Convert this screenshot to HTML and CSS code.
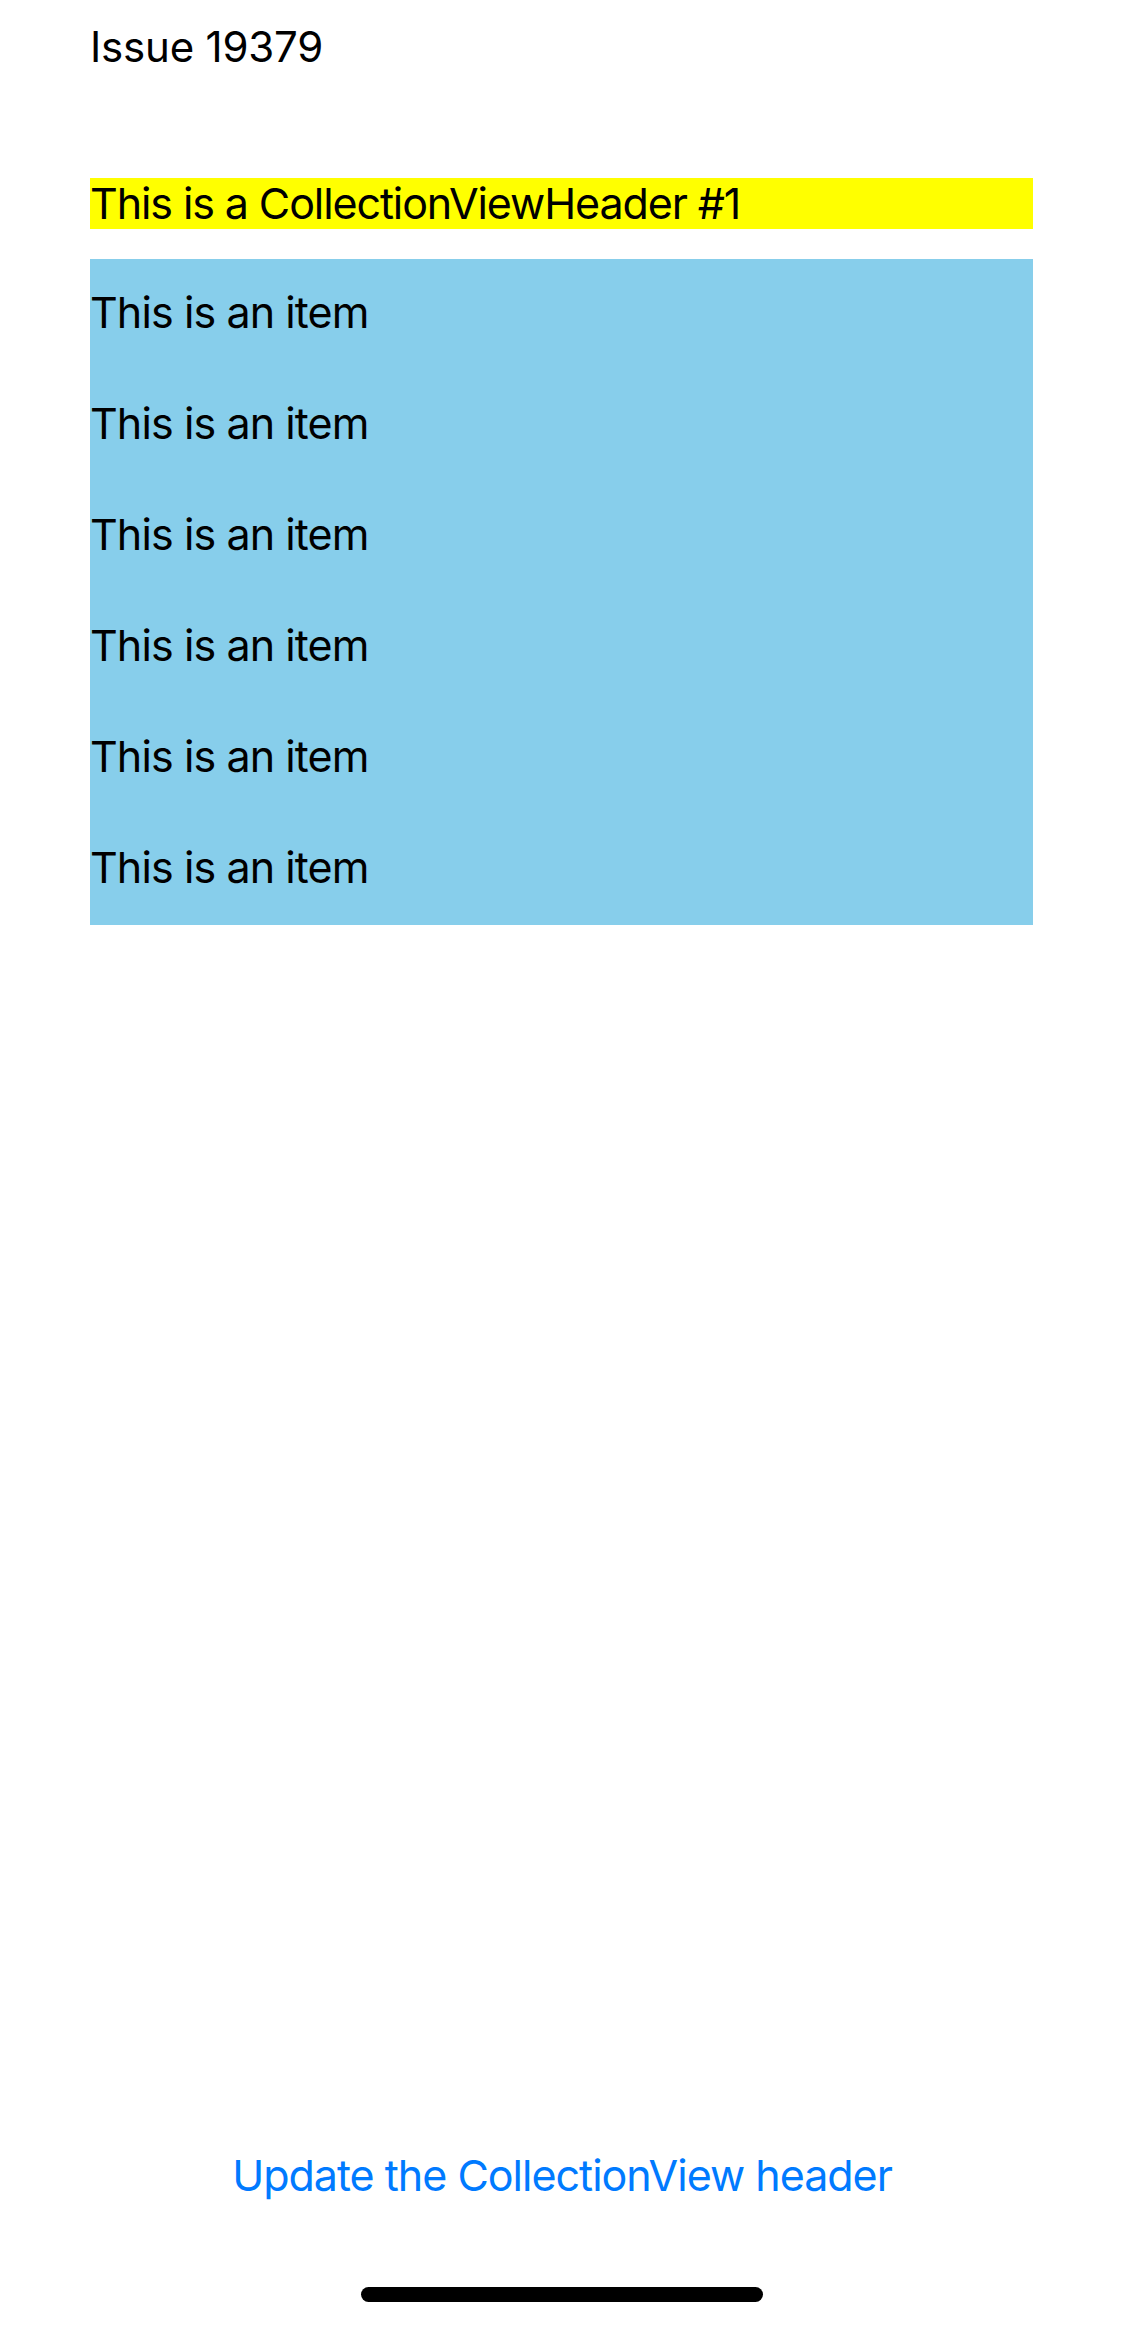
FILE: index.html
```html
<!DOCTYPE html>
<html>
<head>
<meta charset="utf-8">
<link rel="stylesheet" href="styles.css">
</head>
<body>
<div class="page">
  <main class="content">
    <div class="title">Issue 19379</div>
    <div class="collection">
      <div class="header">This is a CollectionViewHeader #1</div>
      <div class="items">
        <div class="item">This is an item</div>
        <div class="item">This is an item</div>
        <div class="item">This is an item</div>
        <div class="item">This is an item</div>
        <div class="item">This is an item</div>
        <div class="item">This is an item</div>
      </div>
    </div>
  </main>
  <footer class="footer">
    <div class="button">Update the CollectionView header</div>
    <div class="home-indicator"></div>
  </footer>
</div>
</body>
</html>
```

FILE: styles.css
```css
html, body {
  margin: 0;
  padding: 0;
  background: #ffffff;
}
body {
  font-family: Inter, "Noto Sans", sans-serif;
  color: #000000;
}
.page {
  height: 2326px;
  display: flex;
  flex-direction: column;
}
.content {
  flex: 1;
  padding: 22px 91px 0 90px;
}
.title {
  font-size: 42px;
  line-height: 50px;
  letter-spacing: -0.2px;
}
.collection {
  margin-top: 106px;
  display: flex;
  flex-direction: column;
  gap: 30px;
}
.header {
  background: #ffff00;
  font-size: 43px;
  line-height: 51px;
  height: 51px;
  letter-spacing: -1.1px;
}
.items {
  background: #87ceeb;
}
.item {
  box-sizing: border-box;
  height: 111px;
  padding-top: 28px;
  font-size: 43px;
  line-height: 51px;
  letter-spacing: -0.9px;
}
.footer {
  display: flex;
  flex-direction: column;
  align-items: center;
  padding-bottom: 24px;
}
.button {
  color: #007aff;
  font-size: 43px;
  line-height: 51px;
  letter-spacing: -1px;
}
.home-indicator {
  margin-top: 86px;
  width: 402px;
  height: 15px;
  border-radius: 8px;
  background: #000000;
}
```
